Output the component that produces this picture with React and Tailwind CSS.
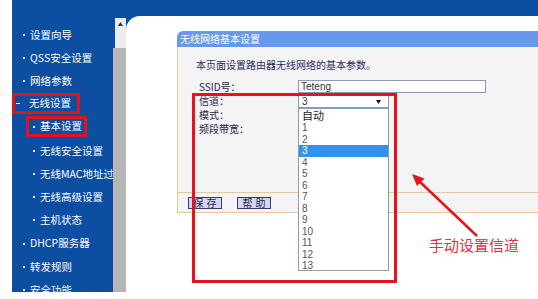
const NAV = [
  { label: '设置向导' },
  { label: 'QSS安全设置' },
  { label: '网络参数' },
  { label: '无线设置', open: true, boxed: true },
  { label: '基本设置', sub: true, boxed: true },
  { label: '无线安全设置', sub: true },
  { label: '无线MAC地址过滤', sub: true },
  { label: '无线高级设置', sub: true },
  { label: '主机状态', sub: true },
  { label: 'DHCP服务器' },
  { label: '转发规则' },
  { label: '安全功能' },
]

const CHANNELS = ['1', '2', '3', '4', '5', '6', '7', '8', '9', '10', '11', '12', '13']

function Dot() {
  return <span className="w-[2px] h-[2px] bg-[#dfe8ff] shrink-0" />
}

function NavItem({ item }) {
  if (item.boxed && item.open) {
    return (
      <div className="h-[23.2px] flex items-start">
        <span className="h-[21px] w-[68px] border-[3px] border-[#e3121b] flex items-center pl-[1px] gap-[9px]">
          <span className="w-[4px] h-[1px] bg-white shrink-0" />
          <span>{item.label}</span>
        </span>
      </div>
    )
  }
  if (item.boxed) {
    return (
      <div className="h-[23.2px] flex items-start pl-[14px]">
        <span className="h-[21px] w-[61px] border-[3px] border-[#e3121b] flex items-center pl-[4px] gap-[5px]">
          <Dot />
          <span>{item.label}</span>
        </span>
      </div>
    )
  }
  return (
    <div className={`h-[23.2px] flex items-center gap-[5px] whitespace-nowrap ${item.sub ? 'pl-[21px]' : 'pl-[11px]'}`}>
      <Dot />
      <span>{item.label}</span>
    </div>
  )
}

export default function App() {
  return (
    <div className="relative w-[538px] h-[299px] overflow-hidden bg-white font-['Noto_Sans_CJK_SC',sans-serif]">
      <div className="flex h-[292px] ml-[12px] bg-[#0b4ea2]">
        {/* ── Sidebar ───────────────────────────────────────────── */}
        <nav className="w-[101px] shrink-0 pt-[23.4px] overflow-hidden text-white text-[10.5px] leading-none">
          {NAV.map((item) => <NavItem key={item.label} item={item} />)}
        </nav>

        {/* ── Scrollbar ─────────────────────────────────────────── */}
        <div className="w-[13px] shrink-0 mt-[18px] flex flex-col">
          <div className="h-[30px] ml-[2px] bg-[#ececec] flex justify-center pt-[4px]">
            <svg width="5" height="4" viewBox="0 0 5 4"><path d="M2.5 0L5 4H0z" fill="#333" /></svg>
          </div>
          <div className="flex-1 bg-[#b6b6b6]" />
        </div>

        {/* ── Content ───────────────────────────────────────────── */}
        <div className="flex-1 min-w-0 pt-[16px] flex flex-col">
          <div className="flex-1 bg-white rounded-tl-[14px] pt-[15px] pl-[51px] overflow-hidden">
            <div className="w-[400px]">
              <div className="h-[16px] bg-[#6699ee] rounded-tl-[6px] pl-[3px] text-white text-[10px] leading-[16px]">
                无线网络基本设置
              </div>
              <div className="h-[145px] bg-[#f4f4f4] border-l border-[#e6c6a2]">
                <p className="pt-[11px] pl-[18px] text-[10px] leading-[14px] text-[#2b2b5e]">
                  本页面设置路由器无线网络的基本参数。
                </p>
                <div className="mt-[8px] pl-[21px] text-[10px] leading-[14px] text-[#1f1f4f]">
                  <div className="h-[14px] flex items-start">
                    <span className="w-[99px]">SSID号：</span>
                    <div className="w-[188px] h-[13px] border border-[#8a9ab2] bg-white pl-[2px] font-['Liberation_Sans',sans-serif] text-[10px] leading-[11px] text-[#333]">
                      Teteng
                    </div>
                  </div>
                  <div className="h-[14px] flex items-end">
                    <span className="w-[99px] self-center">信道：</span>
                    <div className="relative w-[91px] h-[13px] border border-[#7f9db9] bg-white pl-[3px] flex items-center justify-between pr-[7px] font-['Liberation_Sans',sans-serif] text-[10px] text-[#333]">
                      <span>3</span>
                      <svg width="5" height="4" viewBox="0 0 5 4"><path d="M0 0H5L2.5 4z" fill="#111" /></svg>
                      {/* dropdown list */}
                      <div className="absolute left-[-1px] top-[12px] w-[91px] h-[163px] border border-[#8c9ca8] bg-white z-10 font-['Liberation_Sans',sans-serif]">
                        <div className="h-[13px] pl-[3px] text-[11px] leading-[13px] text-[#222] font-['Noto_Sans_CJK_SC',sans-serif]">自动</div>
                        {CHANNELS.map((c) => (
                          <div
                            key={c}
                            className={`h-[11.5px] pl-[3px] text-[10px] leading-[11.5px] ${c === '3' ? 'bg-[#3391ea] text-white' : 'text-[#555]'}`}
                          >
                            {c}
                          </div>
                        ))}
                      </div>
                    </div>
                  </div>
                  <div className="h-[14px]">模式：</div>
                  <div className="h-[14px]">频段带宽：</div>
                </div>
              </div>
              <div className="h-[21px] bg-[#f4f4f4] border-y border-l border-[#e6c6a2] flex items-center gap-[15px] pl-[10px]">
                <button className="w-[34px] h-[12px] border border-[#3a3a6a] bg-[#d6d6f2] text-[10px] leading-[10px] tracking-[3px] text-[#1f1f4f] pl-[3px]">保存</button>
                <button className="w-[34px] h-[12px] border border-[#3a3a6a] bg-[#d6d6f2] text-[10px] leading-[10px] tracking-[3px] text-[#1f1f4f] pl-[3px]">帮助</button>
              </div>
            </div>
          </div>
        </div>
      </div>

      {/* ── Annotation overlay ──────────────────────────────────── */}
      <div className="absolute left-[192px] top-[93px] w-[205px] h-[190px] border-[3px] border-[#e4141c] z-20" />
      <svg className="absolute left-0 top-0 z-20 pointer-events-none" width="538" height="299">
        <line x1="477" y1="236" x2="419" y2="181" stroke="#e4141c" strokeWidth="2.5" />
        <path d="M412 174L424.5 178.5L417 186z" fill="#e4141c" />
      </svg>
      <div className="absolute left-[429px] top-[236px] text-[15px] leading-[18px] text-[#d8363c] z-20">
        手动设置信道
      </div>
    </div>
  )
}
